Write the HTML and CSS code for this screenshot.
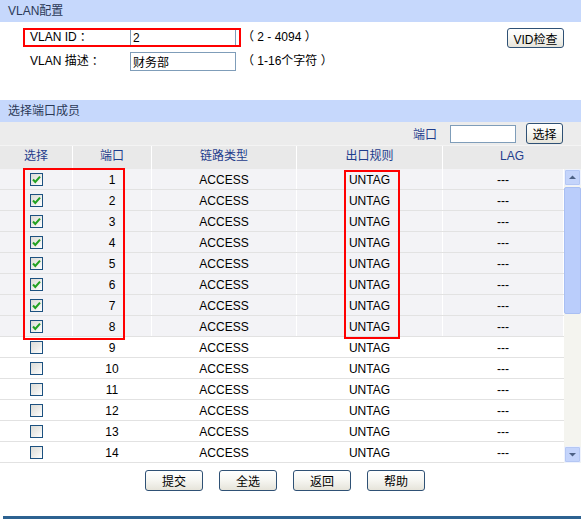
FILE: index.html
```html
<!DOCTYPE html>
<html lang="zh-CN">
<head>
<meta charset="utf-8">
<title>VLAN配置</title>
<link rel="stylesheet" href="styles.css">
</head>
<body>
<div class="page">
  <div class="bar">VLAN配置</div>
  <div class="config">
    <div class="crow">
      <span class="lbl">VLAN ID<span class="colon">：</span></span>
      <input class="txt" type="text" value="2">
      <span class="hint">（ 2 - 4094 ）</span>
      <button class="btn vid">VID检查</button>
    </div>
    <div class="crow crow2">
      <span class="lbl">VLAN 描述<span class="colon">：</span></span>
      <input class="txt" type="text" value="财务部">
      <span class="hint">（ 1-16个字符 ）</span>
    </div>
  </div>

  <div class="bar">选择端口成员</div>
  <div class="filter">
    <span class="flbl">端口</span>
    <input class="ftxt" type="text">
    <button class="btn pick">选择</button>
  </div>

  <div class="thead">
    <div>选择</div><div>端口</div><div>链路类型</div><div>出口规则</div><div>LAG</div>
  </div>

  <div class="tbody">
    <div class="rows">
      <div class="row on"><div><span class="cb"><svg viewBox="0 0 11 11"><path d="M2 5.5 L4.3 8 L9 2.6" /></svg></span></div><div>1</div><div>ACCESS</div><div>UNTAG</div><div>---</div></div>
      <div class="row on"><div><span class="cb"><svg viewBox="0 0 11 11"><path d="M2 5.5 L4.3 8 L9 2.6" /></svg></span></div><div>2</div><div>ACCESS</div><div>UNTAG</div><div>---</div></div>
      <div class="row on"><div><span class="cb"><svg viewBox="0 0 11 11"><path d="M2 5.5 L4.3 8 L9 2.6" /></svg></span></div><div>3</div><div>ACCESS</div><div>UNTAG</div><div>---</div></div>
      <div class="row on"><div><span class="cb"><svg viewBox="0 0 11 11"><path d="M2 5.5 L4.3 8 L9 2.6" /></svg></span></div><div>4</div><div>ACCESS</div><div>UNTAG</div><div>---</div></div>
      <div class="row on"><div><span class="cb"><svg viewBox="0 0 11 11"><path d="M2 5.5 L4.3 8 L9 2.6" /></svg></span></div><div>5</div><div>ACCESS</div><div>UNTAG</div><div>---</div></div>
      <div class="row on"><div><span class="cb"><svg viewBox="0 0 11 11"><path d="M2 5.5 L4.3 8 L9 2.6" /></svg></span></div><div>6</div><div>ACCESS</div><div>UNTAG</div><div>---</div></div>
      <div class="row on"><div><span class="cb"><svg viewBox="0 0 11 11"><path d="M2 5.5 L4.3 8 L9 2.6" /></svg></span></div><div>7</div><div>ACCESS</div><div>UNTAG</div><div>---</div></div>
      <div class="row on"><div><span class="cb"><svg viewBox="0 0 11 11"><path d="M2 5.5 L4.3 8 L9 2.6" /></svg></span></div><div>8</div><div>ACCESS</div><div>UNTAG</div><div>---</div></div>
      <div class="row"><div><span class="cb"></span></div><div>9</div><div>ACCESS</div><div>UNTAG</div><div>---</div></div>
      <div class="row"><div><span class="cb"></span></div><div>10</div><div>ACCESS</div><div>UNTAG</div><div>---</div></div>
      <div class="row"><div><span class="cb"></span></div><div>11</div><div>ACCESS</div><div>UNTAG</div><div>---</div></div>
      <div class="row"><div><span class="cb"></span></div><div>12</div><div>ACCESS</div><div>UNTAG</div><div>---</div></div>
      <div class="row"><div><span class="cb"></span></div><div>13</div><div>ACCESS</div><div>UNTAG</div><div>---</div></div>
      <div class="row"><div><span class="cb"></span></div><div>14</div><div>ACCESS</div><div>UNTAG</div><div>---</div></div>
    </div>
    <div class="vscroll">
      <div class="sb-btn"><svg viewBox="0 0 15 15"><path d="M4 9 L11 9 L7.5 5.5 Z" /></svg></div>
      <div class="sb-thumb"></div>
      <div class="sb-track"></div>
      <div class="sb-btn"><svg viewBox="0 0 15 15"><path d="M4 6 L11 6 L7.5 9.5 Z" /></svg></div>
    </div>
  </div>

  <div class="actions">
    <button class="btn act">提交</button>
    <button class="btn act">全选</button>
    <button class="btn act">返回</button>
    <button class="btn act">帮助</button>
  </div>

  <div class="footline"></div>

  <div class="mark mark-id"></div>
  <div class="mark mark-ports"></div>
  <div class="mark mark-rule"></div>
</div>
</body>
</html>
```

FILE: styles.css
```css
* { box-sizing: border-box; }

html, body {
  margin: 0;
  padding: 0;
  background: #ffffff;
}

body {
  font-family: "Liberation Sans", "Noto Sans CJK SC", sans-serif;
  font-size: 12px;
  color: #000;
}

.page {
  position: relative;
  width: 581px;
}

.bar {
  height: 22px;
  line-height: 22px;
  padding-left: 8px;
  background: #c6d8fc;
  color: #2b3957;
}

.config {
  height: 78px;
  padding: 6px 17px 0 30px;
}

.crow {
  display: flex;
  align-items: flex-start;
  height: 20px;
}

.crow2 {
  margin-top: 4px;
}

.lbl {
  width: 100px;
  line-height: 19px;
  color: #000;
}

.colon {
  margin-left: 3px;
}

.txt {
  width: 106px;
  height: 19px;
  border: 1px solid #7f9db9;
  padding: 0 2px;
  margin: 0;
  font: inherit;
  color: #000;
  background: #fff;
}

.hint {
  margin-left: 6px;
  line-height: 19px;
}

.btn {
  font-family: "Liberation Sans", "Noto Sans CJK SC", sans-serif;
  font-size: 12px;
  color: #000;
  padding: 0;
  margin: 0;
  border: 1px solid #2f5175;
  border-radius: 3px;
  background: linear-gradient(#ffffff 0%, #f7f7f3 45%, #e6e4da 100%);
}

.vid {
  margin-left: auto;
  width: 57px;
  height: 20px;
}

.filter {
  height: 23px;
  background: #ececec;
  display: flex;
  align-items: center;
  justify-content: flex-end;
  padding-right: 18px;
}

.flbl {
  color: #1f3d8c;
}

.ftxt {
  width: 66px;
  height: 18px;
  margin: 0 0 0 13px;
  border: 1px solid #7f9db9;
  background: #fff;
  padding: 0;
}

.pick {
  width: 37px;
  height: 21px;
  margin-left: 10px;
}

.thead {
  display: grid;
  grid-template-columns: 73px 79px 145px 146px 1fr;
  height: 24px;
  background: #e9e9e9;
  border-top: 1px solid #f4f4f4;
}

.thead > div {
  text-align: center;
  line-height: 20px;
  color: #1f3d8c;
  border-right: 1px solid #ffffff;
}

.thead > div:last-child {
  border-right: none;
}

.tbody {
  display: flex;
  height: 294px;
}

.rows {
  width: 564px;
  height: 294px;
  overflow: hidden;
  box-shadow: inset 1px 0 #e2e2e2;
}

.row {
  display: grid;
  grid-template-columns: 73px 79px 145px 146px 121px;
  height: 21px;
  border-bottom: 1px solid #e2e2e2;
  background: #ffffff;
}

.row.on {
  background: #f3f3f6;
}

.row > div {
  text-align: center;
  padding-top: 2px;
  line-height: 18px;
  border-right: 1px solid #ffffff;
}

.row > div:first-child {
  display: flex;
  justify-content: center;
  align-items: center;
  padding-top: 0;
}

.cb {
  display: block;
  width: 13px;
  height: 13px;
  margin-left: 1px;
  border: 1px solid #1c5180;
  background: linear-gradient(135deg, #dcdcd7 0%, #ebebe8 50%, #ffffff 100%);
}

.cb svg {
  display: block;
  width: 11px;
  height: 11px;
}

.cb path {
  fill: none;
  stroke: #21a121;
  stroke-width: 2;
}

.vscroll {
  width: 17px;
  height: 294px;
  display: flex;
  flex-direction: column;
  background: #f4f4ef;
}

.sb-btn {
  width: 17px;
  height: 17px;
  background: #c4d4fb;
  border: 1px solid #eef2fd;
  box-shadow: inset 0 0 0 1px #b4c7f4;
  border-radius: 2px;
}

.sb-btn svg {
  display: block;
  width: 15px;
  height: 15px;
}

.sb-btn path {
  fill: #4d6185;
}

.sb-thumb {
  height: 127px;
  margin-top: 1px;
  background: #bacdfb;
  border: 1px solid #a9bff3;
  border-radius: 2px;
}

.sb-track {
  flex: 1;
}

.actions {
  display: flex;
  gap: 16px;
  padding-left: 145px;
  margin-top: 7px;
}

.act {
  width: 58px;
  height: 21px;
}

.footline {
  margin: 25px 0 0 3px;
  height: 3px;
  background: #2d6291;
}

.mark {
  position: absolute;
  border: 2px solid #ff0000;
  pointer-events: none;
}

.mark-id {
  left: 23px;
  top: 28px;
  width: 218px;
  height: 19px;
}

.mark-ports {
  left: 23px;
  top: 168px;
  width: 102px;
  height: 172px;
}

.mark-rule {
  left: 344px;
  top: 170px;
  width: 56px;
  height: 169px;
}
```
